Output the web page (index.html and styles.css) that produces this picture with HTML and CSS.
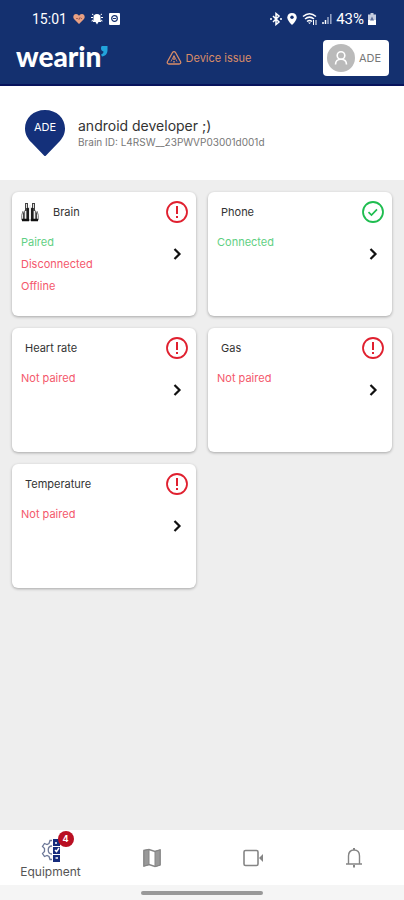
FILE: index.html
```
<!DOCTYPE html>
<html lang="en">
<head>
    <meta charset="UTF-8">
    <meta name="viewport" content="width=device-width, initial-scale=1.0">
    <title>Wearin' - Equipment</title>
    <link rel="stylesheet" href="styles.css">
</head>
<body>
    <svg class="sprite" aria-hidden="true">
        <symbol id="alert" viewBox="0 0 24 24">
            <circle cx="12" cy="12" r="10" fill="none" stroke="currentColor" stroke-width="1.800"/>
            <path d="M12 6v8" fill="none" stroke="currentColor" stroke-width="2"/>
            <path d="M11 16h2v2h-2z" fill="currentColor"/>
        </symbol>
        <symbol id="check" viewBox="0 0 24 24">
            <circle cx="12" cy="12" r="10" fill="none" stroke="currentColor" stroke-width="1.8"/>
            <path d="M7.5 12.2l3 2.8 5.5-5.6" fill="none" stroke="currentColor" stroke-width="1.7"/>
        </symbol>
        <symbol id="chevron" viewBox="0 0 24 24">
            <path d="M9.5 7l5 5-5 5" fill="none" stroke="currentColor" stroke-width="2.2"/>
        </symbol>
    </svg>

    <header>
        <div class="status-bar">
            <div class="status-left">
                <span class="clock">15:01</span>
                <svg width="12" height="12" viewBox="0 0 12 12"><path d="M6 11L1 6C-.7 3.500 1 1 3 1c1.500 0 2.500 1 3 1.800C6.500 2 7.500 1 9 1c2 0 3.700 2.500 2 5z" fill="#e9a083"/><path d="M3 5.500h2l1 1 1-2 1 1h1" fill="none" stroke="#a65f50"/></svg>
                <svg width="12" height="12" viewBox="0 0 12 12"><path d="M6 1c2.500 0 3.500 1.500 3.500 3.500V7l1 2h-9l1-2V4.500C2.500 2.500 3.500 1 6 1zM4.500 9h3L6 11.500z" fill="#fff"/><path d="M2.500 2L1 1M9.500 2L11 1M2 4.500H0M10 4.500h2M2 7L.5 8M10 7l1.500 1" stroke="#fff"/></svg>
                <svg width="11" height="12" viewBox="0 0 11 12"><rect width="11" height="12" rx="1" fill="#fff"/><circle cx="5.500" cy="5.500" r="2.800" fill="none" stroke="#14306f" stroke-width="1.200"/><path d="M4 5.500h3" stroke="#14306f"/></svg>
            </div>
            <div class="status-right">
                <svg width="12" height="14" viewBox="0 0 12 14"><path d="M3 4l6 6-3 2.500v-11L9 4l-6 6M0 7h2M10 7h2" fill="none" stroke="#fff" stroke-width="1.500"/></svg>
                <svg width="12" height="14" viewBox="0 0 12 14"><path d="M6 1c3 0 4.700 2 4.700 4.500C10.700 8.500 6 13 6 13S1.300 8.500 1.300 5.500C1.300 3 3 1 6 1z" fill="#fff"/><circle cx="6" cy="5.200" r="1.700" fill="#14306f"/></svg>
                <svg width="16" height="14" viewBox="0 0 16 14"><path d="M1 4.500c4-3.500 9-3.500 13 0M3 7c3-2.500 6-2.500 9 0M5 9.500c2-1.500 3-1.500 5 0" fill="none" stroke="#fff" stroke-width="1.500"/><path d="M6 10.500h3L7.500 12z" fill="#fff"/><path d="M11.500 8v5M14 8v5" stroke="#fff"/></svg>
                <svg width="10" height="14" viewBox="0 0 10 14"><path d="M1 12v-2M3.500 12V8" stroke="#fff" stroke-width="1.500"/><path d="M6 12V5M8.800 12V2" stroke="#9ba8c8" stroke-width="1.500"/></svg>
                <span class="battery">43%</span>
                <svg width="8" height="12" viewBox="0 0 8 12"><path d="M2.500 0h3v1.500H8V12H0V1.500h2.500z" fill="#c5cde0"/><path d="M0 7h8v5H0z" fill="#fff"/><path d="M4 3.500L2 7.500h4z" fill="#5c6e9b"/></svg>
            </div>
        </div>
        <div class="top-bar">
            <a class="logo" href="#">wearin<svg width="7" height="11" viewBox="0 0 7 11"><path d="M1 0h5.500v4C6.500 7.500 4.500 10 1 10.500L0 8.500c1.700-.7 2.500-1.700 2.500-3C1 5 0 4 0 2.500 0 1 .4.400 1 0z" fill="#22a4dc"/></svg></a>
            <a class="issue" href="#">
                <svg width="16" height="16" viewBox="0 0 16 16"><path d="M6.500 2.500c.7-1.200 2.300-1.200 3 0l5 9c.7 1.300 0 2.500-1.400 2.500H2.900c-1.400 0-2.100-1.200-1.400-2.500z" fill="none" stroke="currentColor" stroke-width="1.300"/><path d="M5 11.500l3-6 3 6" fill="none" stroke="currentColor" stroke-width=".8"/><path d="M8 6v4M8 11v1.500" stroke="currentColor" stroke-width="1.400"/></svg>
                Device issue
            </a>
            <button class="user">
                <svg width="28" height="28" viewBox="0 0 28 28"><circle cx="14" cy="14" r="14" fill="#bababa"/><circle cx="14" cy="11.500" r="3.800" fill="none" stroke="#fff" stroke-width="1.600"/><path d="M8.500 20.500c0-3.500 2-5.300 5.500-5.300s5.500 1.800 5.500 5.300" fill="none" stroke="#fff" stroke-width="1.600"/></svg>
                ADE
            </button>
        </div>
    </header>

    <section class="profile">
        <div class="pin">
            <svg width="42" height="48" viewBox="0 0 42 48"><path d="M21 1c11.500 0 20 8 20 18.500 0 6-3 10.500-6.500 14L22 46.500q-1 1-2 0L7.500 33.500C4 30 1 25.500 1 19.500 1 9 9.500 1 21 1z" fill="#14307a"/></svg>
            <span>ADE</span>
        </div>
        <div>
            <h1>android developer ;)</h1>
            <p>Brain ID: L4RSW__23PWVP03001d001d</p>
        </div>
    </section>

    <main>
        <a class="card" href="#">
            <h2>
                <svg width="18" height="20" viewBox="0 0 18 20"><path d="M4 1h3v4l1 2v11H2V11l2-3zM11 1h3v7l2 3v7h-6V7l1-2z" fill="#444"/><path d="M5.500 2v4M12.500 2v4M9 3v15" stroke="#ddd"/><path d="M4.500 9v8M13.500 9v8" stroke="#eee" stroke-width="1.500"/><path d="M2 9Q0 13 .8 18H17.200Q18 13 16 9" fill="none" stroke="#777"/><path d="M1 18h7M10 18h7" stroke="#111" stroke-width="2.500"/><path d="M7 6v11M11 6v11" stroke="#111" stroke-width="1.500"/></svg>
                Brain
            </h2>
            <svg class="state bad"><use href="#alert"/></svg>
            <ul>
                <li class="good">Paired</li>
                <li class="bad">Disconnected</li>
                <li class="bad">Offline</li>
            </ul>
            <svg class="arrow"><use href="#chevron"/></svg>
        </a>
        <a class="card" href="#">
            <h2>Phone</h2>
            <svg class="state good"><use href="#check"/></svg>
            <ul>
                <li class="good">Connected</li>
            </ul>
            <svg class="arrow"><use href="#chevron"/></svg>
        </a>
        <a class="card" href="#">
            <h2>Heart rate</h2>
            <svg class="state bad"><use href="#alert"/></svg>
            <ul>
                <li class="bad">Not paired</li>
            </ul>
            <svg class="arrow"><use href="#chevron"/></svg>
        </a>
        <a class="card" href="#">
            <h2>Gas</h2>
            <svg class="state bad"><use href="#alert"/></svg>
            <ul>
                <li class="bad">Not paired</li>
            </ul>
            <svg class="arrow"><use href="#chevron"/></svg>
        </a>
        <a class="card" href="#">
            <h2>Temperature</h2>
            <svg class="state bad"><use href="#alert"/></svg>
            <ul>
                <li class="bad">Not paired</li>
            </ul>
            <svg class="arrow"><use href="#chevron"/></svg>
        </a>
    </main>

    <nav>
        <a class="active" href="#">
            <span class="nav-icon">
                <svg width="22" height="26" viewBox="0 0 22 26"><path d="M12 3.500h-2l-1 3-2 1-2.500-1-2 3 2 2v3l-2 2 2 3 2.500-1 2 1 1 3h2M12 9c-5 0-5 8 0 8" fill="none" stroke="#6d7898" stroke-width="1.300"/><path d="M13 2h7v23h-7z" fill="#152b7c"/><path d="M13 9.500h7M13 17.500h7" stroke="#fff"/><path d="M15 13l1.500 1.500L19 11M15.500 21h2.500M15 6h2" fill="none" stroke="#fff" stroke-width="1.500"/></svg>
                <span class="badge">4</span>
            </span>
            Equipment
        </a>
        <a href="#" aria-label="Map">
            <svg width="20" height="20" viewBox="0 0 20 20"><path d="M2 2.500l5-1 6 2 5-1.500v15l-5 1.500-6-2-5 1.500z" fill="none" stroke="#858585" stroke-width="1.600"/><path d="M2 2.500l5-1v15l-5 1.500zM13 3.500L18 2v15l-5 1.500z" fill="#999" stroke="#858585"/></svg>
        </a>
        <a href="#" aria-label="Video">
            <svg width="22" height="20" viewBox="0 0 22 20"><rect x="2" y="2.500" width="14" height="15" rx="1.500" fill="none" stroke="#858585" stroke-width="1.600"/><path d="M17 10l4-4v8z" fill="#858585"/></svg>
        </a>
        <a href="#" aria-label="Notifications">
            <svg width="18" height="22" viewBox="0 0 18 22"><path d="M3.500 16.500V9c0-3.500 2-6 5.500-6s5.500 2.500 5.500 6v7.500M1 17h16" fill="none" stroke="#858585" stroke-width="1.400"/><path d="M9 1v2M9 18v2.500" stroke="#858585" stroke-width="2"/></svg>
        </a>
    </nav>
    <div class="gesture"></div>
</body>
</html>
```
FILE: styles.css
```
* {
    box-sizing: border-box;
}
body {
    font-family: Inter, 'Liberation Sans', sans-serif;
    margin: 0;
    min-height: 100vh;
    display: flex;
    flex-direction: column;
    background-color: #eee;
    color: #333;
}
a {
    color: inherit;
    text-decoration: none;
}
svg {
    flex: none;
}
.sprite {
    position: absolute;
    width: 0;
    height: 0;
}
header {
    background-color: #14306f;
    border-bottom: 2px solid #07135c;
    color: #fff;
}
.status-bar {
    display: flex;
    justify-content: space-between;
    align-items: center;
    height: 38px;
    padding: 0 28px 0 32px;
    font-family: Roboto, sans-serif;
    font-size: 15px;
}
.status-left,
.status-right {
    display: flex;
    align-items: center;
}
.status-left {
    gap: 6px;
}
.status-right {
    gap: 4px;
}
.clock {
    font-size: 14px;
}
.top-bar {
    display: grid;
    grid-template-columns: 1fr auto 1fr;
    align-items: center;
    height: 46px;
    padding: 0 15px 6px 16px;
}
.logo {
    display: flex;
    align-items: flex-start;
    padding-bottom: 4px;
    font-family: Lato, sans-serif;
    font-size: 28px;
    font-weight: 900;
    line-height: 32px;
}
.logo svg {
    margin-top: 6px;
}
.issue {
    display: flex;
    align-items: center;
    gap: 4px;
    margin-left: 12px;
    color: #d98c68;
    font-size: 11px;
}
.user {
    justify-self: end;
    display: flex;
    align-items: center;
    gap: 4px;
    width: 66px;
    height: 36px;
    padding: 0 4px;
    border: none;
    border-radius: 4px;
    background-color: #fff;
    color: #777;
    font-family: inherit;
    font-size: 11px;
    cursor: pointer;
}
.profile {
    display: flex;
    align-items: center;
    gap: 12px;
    padding: 23px 24px;
    background-color: #fff;
}
.pin {
    display: grid;
}
.pin svg,
.pin span {
    grid-area: 1 / 1;
}
.pin span {
    justify-self: center;
    padding-top: 11px;
    color: #fff;
    font-size: 11px;
    line-height: 14px;
}
h1 {
    margin: 0;
    font-size: 14px;
    font-weight: normal;
    line-height: 18px;
}
.profile p {
    margin: 0;
    color: #777;
    font-size: 10px;
    line-height: 14px;
}
main {
    flex: 1;
    display: grid;
    grid-template-columns: 1fr 1fr;
    align-content: start;
    gap: 12px;
    padding: 12px;
}
.card {
    display: grid;
    grid-template-columns: 1fr 24px;
    grid-template-rows: 24px 1fr;
    row-gap: 7px;
    min-height: 124px;
    padding: 8px 7px 8px 9px;
    border-radius: 6px;
    background-color: #fff;
    box-shadow: 0 1px 3px rgba(0, 0, 0, 0.3);
}
h2 {
    display: flex;
    align-items: center;
    gap: 14px;
    margin: 0;
    padding-left: 4px;
    font-size: 11px;
    font-weight: normal;
}
h2:has(svg) {
    padding-left: 0;
}
.state,
.arrow {
    width: 24px;
    height: 24px;
}
.arrow {
    margin-top: 11px;
    color: #111;
}
ul {
    margin: 0;
    padding: 0;
    list-style: none;
    font-size: 11px;
    line-height: 22px;
}
.good {
    color: #5fd083;
}
.bad {
    color: #f4586c;
}
.state.good {
    color: #1fbd50;
}
.state.bad {
    color: #e0202f;
}
nav {
    display: grid;
    grid-template-columns: repeat(4, 1fr);
    height: 55px;
    background-color: #fff;
}
nav a {
    display: flex;
    flex-direction: column;
    align-items: center;
    justify-content: center;
    color: #555;
    font-size: 12px;
    line-height: 14px;
}
.nav-icon {
    position: relative;
    height: 28px;
}
.badge {
    position: absolute;
    top: -6px;
    right: -12px;
    width: 16px;
    height: 16px;
    border-radius: 50%;
    background-color: #b90f22;
    color: #fff;
    font-size: 9px;
    font-weight: bold;
    line-height: 16px;
    text-align: center;
}
.gesture {
    display: flex;
    align-items: center;
    justify-content: center;
    height: 15px;
    background-color: #f5f5f5;
}
.gesture::before {
    content: "";
    width: 30%;
    height: 4px;
    border-radius: 2px;
    background-color: #999;
}
```
